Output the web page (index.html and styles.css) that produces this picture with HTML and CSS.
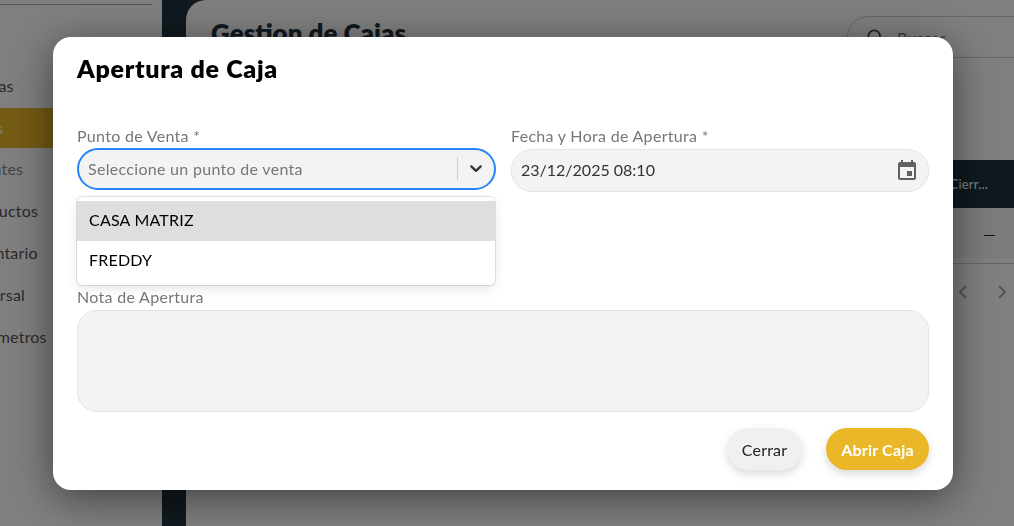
FILE: index.html

```html
<!DOCTYPE html>
<html lang="es">
<head>
    <meta charset="UTF-8">
    <meta name="viewport" content="width=device-width, initial-scale=1.0">
    <title>Gestion de Cajas</title>
    <link rel="stylesheet" href="styles.css">
</head>
<body>
    <div class="app">
        <aside class="sidebar">
            <div class="sidebar-rule"></div>
            <nav class="nav">
                <div class="nav-item">Ventas</div>
                <div class="nav-item active">Cajas</div>
                <div class="nav-item muted">Clientes</div>
                <div class="nav-item">Productos</div>
                <div class="nav-item">Inventario</div>
                <div class="nav-item">Sucursal</div>
                <div class="nav-item">Parámetros</div>
            </nav>
        </aside>
        <main class="main">
            <div class="panel">
                <div class="panel-head">
                    <h1>Gestion de Cajas</h1>
                    <div class="search">
                        <svg width="20" height="20" viewBox="0 0 24 24" fill="none" stroke="#444" stroke-width="2"><circle cx="11" cy="11" r="7"/><path d="M16 16l5 5"/></svg>
                        <span>Buscar</span>
                    </div>
                </div>
                <div class="table-head"><span>Cierr...</span></div>
                <div class="table-row"><span>—</span></div>
                <div class="pager">
                    <svg width="24" height="24" viewBox="0 0 24 24" fill="none" stroke="#aaa" stroke-width="2"><path d="M15 6l-6 6 6 6"/></svg>
                    <svg width="24" height="24" viewBox="0 0 24 24" fill="none" stroke="#aaa" stroke-width="2"><path d="M9 6l6 6-6 6"/></svg>
                </div>
            </div>
        </main>
    </div>

    <div class="overlay">
        <div class="modal">
            <h2>Apertura de Caja</h2>
            <form class="form">
                <div class="form-row">
                    <div class="field">
                        <label>Punto de Venta *</label>
                        <div class="select">
                            <span class="placeholder">Seleccione un punto de venta</span>
                            <span class="select-sep"></span>
                            <svg class="chevron" width="20" height="20" viewBox="0 0 20 20"><path fill="#333" d="M4.516 7.548c0.436-0.446 1.043-0.481 1.576 0l3.908 3.747 3.908-3.747c0.533-0.481 1.141-0.446 1.574 0 0.436 0.445 0.408 1.197 0 1.615-0.406 0.418-4.695 4.502-4.695 4.502-0.217 0.223-0.502 0.335-0.787 0.335s-0.57-0.112-0.789-0.335c0 0-4.287-4.084-4.695-4.502s-0.436-1.17 0-1.615z"/></svg>
                        </div>
                        <div class="menu">
                            <div class="option focused">CASA MATRIZ</div>
                            <div class="option">FREDDY</div>
                        </div>
                    </div>
                    <div class="field">
                        <label class="date-label">Fecha y Hora de Apertura *</label>
                        <div class="date">
                            <span>23/12/2025 08:10</span>
                            <svg width="24" height="24" viewBox="0 0 24 24"><path fill="#616161" d="M17 12h-5v5h5v-5zM16 1v2H8V1H6v2H5c-1.100 0-2 .9-2 2v14c0 1.100.9 2 2 2h14c1.100 0 2-.9 2-2V5c0-1.100-.9-2-2-2h-1V1h-2zm3 18H5V8h14v11z"/></svg>
                        </div>
                    </div>
                </div>
                <div class="field">
                    <label class="note-label">Nota de Apertura</label>
                    <div class="textarea"></div>
                </div>
                <div class="actions">
                    <button type="button" class="btn btn-close">Cerrar</button>
                    <button type="button" class="btn btn-open">Abrir Caja</button>
                </div>
            </form>
        </div>
    </div>
</body>
</html>
```

FILE: styles.css

```css
* {
    box-sizing: border-box;
}
html, body {
    height: 100%;
}
body {
    margin: 0;
    overflow: hidden;
    font-family: "Lato", "Noto Sans", sans-serif;
    font-size: 16px;
    color: #222;
    letter-spacing: 0.2px;
}
.app {
    display: flex;
    height: 526px;
    overflow: hidden;
}
.sidebar {
    width: 162px;
    flex-shrink: 0;
    background: #fff;
    overflow: hidden;
    padding-top: 4px;
}
.sidebar-rule {
    width: 152px;
    height: 1px;
    background: #aaa;
}
.nav {
    margin-top: 60px;
}
.nav-item {
    height: 42px;
    line-height: 42px;
    text-indent: -35px;
    color: #555;
    white-space: nowrap;
}
.nav-item.active {
    height: 40px;
    line-height: 40px;
    margin-top: 1px;
    background: #e9b728;
    color: #fff;
}
.nav-item.muted {
    color: #888;
}
.main {
    flex: 1;
    min-width: 0;
    background: #1f323e;
    padding-left: 24px;
}
.panel {
    height: 100%;
    background: #fff;
    border-top-left-radius: 20px;
}
.panel-head {
    display: flex;
    justify-content: space-between;
    align-items: flex-start;
    height: 160px;
    padding: 16px 0 0 25px;
    overflow: hidden;
}
.panel-head h1 {
    margin: 0;
    font-size: 26px;
    line-height: 34px;
    font-weight: 800;
    letter-spacing: 0;
    color: #1f323e;
}
.search {
    width: 167px;
    height: 42px;
    display: flex;
    align-items: center;
    gap: 12px;
    padding-left: 17px;
    border: 1px solid #ccc;
    border-right: 0;
    border-radius: 21px 0 0 21px;
    color: #777;
}
.table-head {
    height: 48px;
    background: #1f323e;
    color: #fff;
    font-size: 13px;
    display: flex;
    align-items: center;
    justify-content: flex-end;
    padding-right: 26px;
}
.table-row {
    height: 50px;
    display: flex;
    align-items: center;
    justify-content: flex-end;
    padding-right: 18px;
    background: #f6f6f6;
}
.pager {
    display: flex;
    justify-content: flex-end;
    gap: 15px;
    margin-top: 5px;
    padding-top: 16px;
    border-top: 1px solid #ccc;
}
.overlay {
    position: fixed;
    inset: 0;
    background: rgba(0, 0, 0, 0.5);
    display: flex;
    justify-content: center;
    padding: 37px 8px 0 0;
}
.modal {
    width: 900px;
    height: 453px;
    background: #fff;
    border-radius: 18px;
    padding: 16px 24px 20px;
    box-shadow: 0 8px 40px rgba(0, 0, 0, 0.5);
}
.modal h2 {
    margin: 0;
    font-size: 25px;
    line-height: 30px;
    font-weight: 800;
    letter-spacing: 0.7px;
    color: #000;
}
.form {
    margin-top: 43px;
}
.form-row {
    display: grid;
    grid-template-columns: 419px 418px;
    gap: 15px;
    height: 161px;
}
.field {
    position: relative;
}
.field label {
    display: block;
    height: 20px;
    line-height: 20px;
    color: #777;
    font-size: 16px;
    letter-spacing: 0.3px;
    margin-bottom: 2px;
}
.field .date-label {
    margin-bottom: 3px;
}
.field .note-label {
    margin-bottom: 3px;
}
.select {
    height: 42px;
    display: flex;
    align-items: center;
    padding: 0 8px 2px 9px;
    background: #f3f3f3;
    border: 2px solid #2684ff;
    border-radius: 21px;
}
.placeholder {
    flex: 1;
    color: #777;
    letter-spacing: 0.3px;
}
.select-sep {
    width: 1px;
    height: 23px;
    background: #ccc;
    margin-right: 8px;
}
.menu {
    position: absolute;
    left: 0;
    right: 1px;
    top: 71px;
    height: 88px;
    padding: 4px 0;
    background: #fff;
    border-radius: 5px;
    box-shadow: 0 0 0 1px rgba(0, 0, 0, 0.1), 0 4px 11px rgba(0, 0, 0, 0.1);
    z-index: 2;
}
.option {
    height: 40px;
    line-height: 38px;
    padding-left: 12px;
    color: #000;
}
.option.focused {
    background: #dedede;
}
.date {
    height: 43px;
    display: flex;
    align-items: center;
    justify-content: space-between;
    padding: 0 9px 2px;
    background: #f3f3f3;
    border: 1px solid #e4e4e4;
    border-radius: 21px;
    color: #333;
    letter-spacing: 0;
}
.date svg {
    margin-top: 2px;
}
.textarea {
    height: 102px;
    background: #f3f3f3;
    border: 1px solid #e4e4e4;
    border-radius: 20px;
}
.actions {
    display: flex;
    justify-content: flex-end;
    gap: 24px;
    margin-top: 16px;
}
.btn {
    height: 42px;
    border: 0;
    border-radius: 21px;
    font-family: inherit;
    font-size: 16px;
    letter-spacing: inherit;
    box-shadow: 0 4px 10px rgba(0, 0, 0, 0.15);
}
.btn-close {
    width: 75px;
    background: #f0f0f0;
    color: #222;
}
.btn-open {
    width: 103px;
    background: #e9b728;
    color: #fff;
    font-weight: 700;
}
```
